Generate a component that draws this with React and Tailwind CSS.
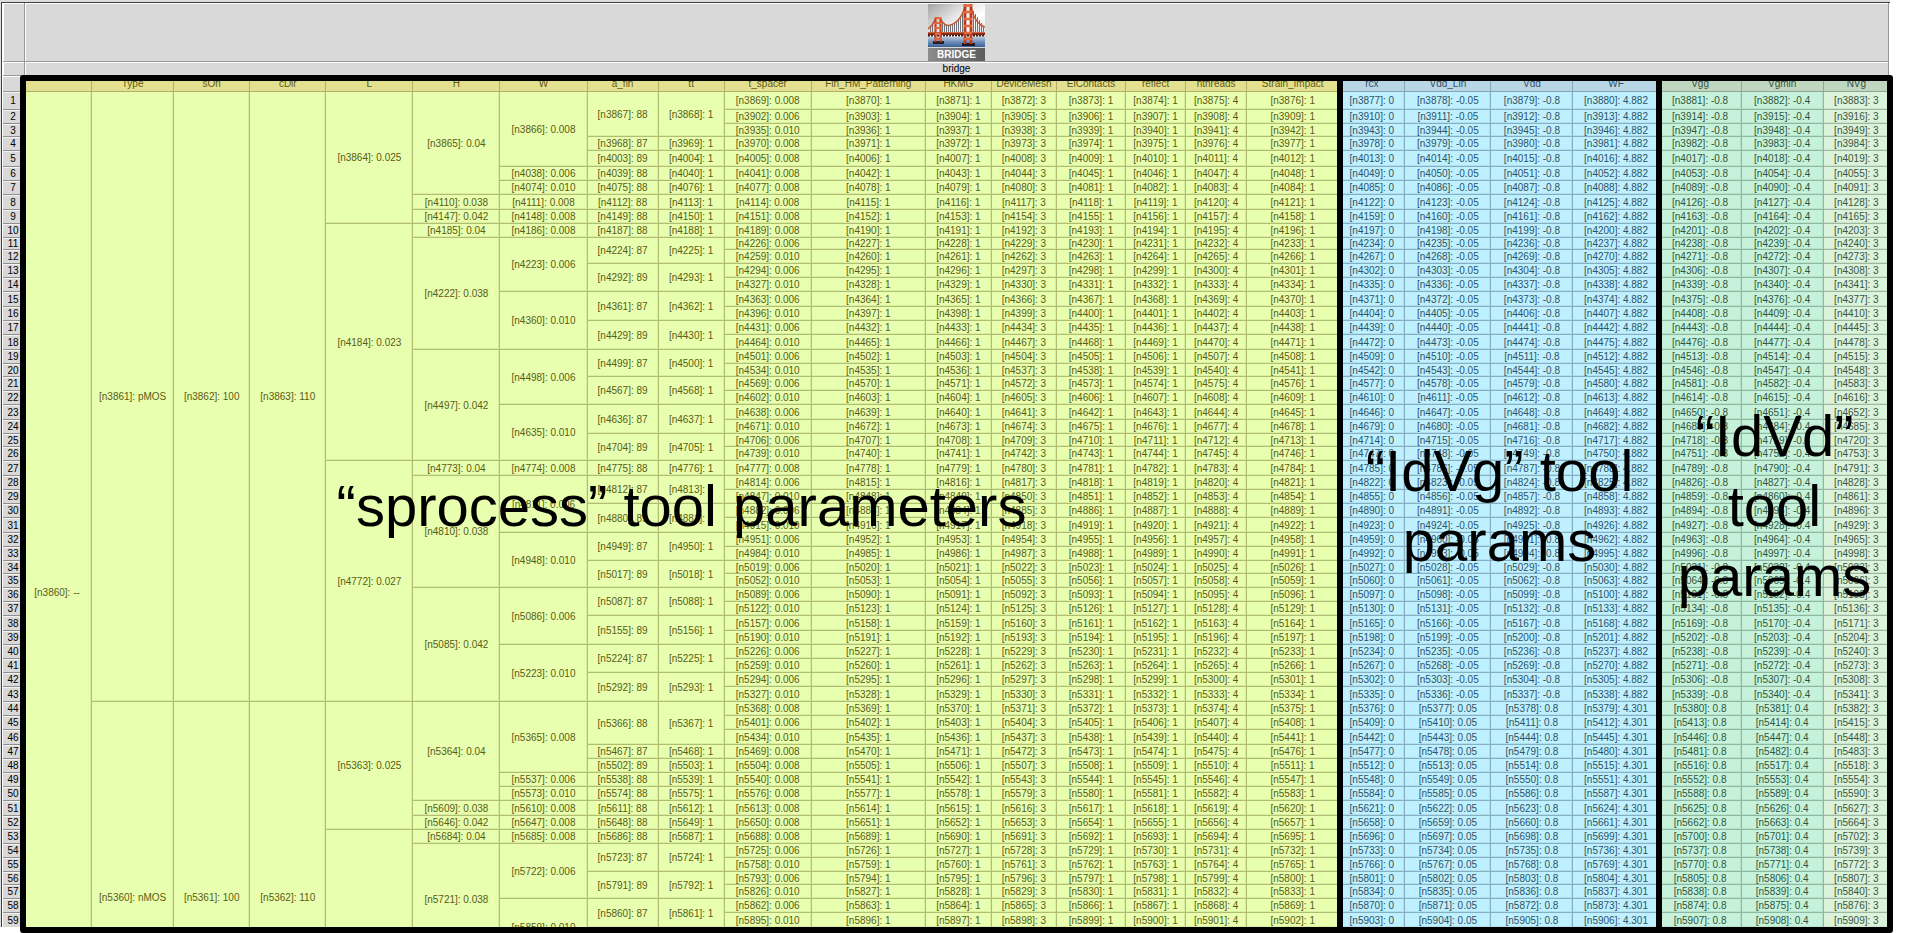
import React from 'react';

const TONES = {
  lime: {
    head: 'bg-[#e3e08f] border-[#b5ae68] text-[#5f5a18]',
    cell: 'bg-[#e8ffb0] border-[#b1bd72] text-[#5a5c12] shadow-[inset_-1px_-1px_0_#d9ee9f]',
  },
  sky: {
    head: 'bg-[#b8d6e6] border-[#85a5b8] text-[#33505f]',
    cell: 'bg-[#bff0ff] border-[#86b0c2] text-[#2c5365] shadow-[inset_-1px_-1px_0_#b0e0f0]',
  },
  mint: {
    head: 'bg-[#bfd6c0] border-[#8ea892] text-[#38543f]',
    cell: 'bg-[#c6f2db] border-[#8fb8a0] text-[#2d5640] shadow-[inset_-1px_-1px_0_#b7e3cb]',
  },
  pale: {
    head: 'bg-[#bfd6c0] border-[#8ea892] text-[#38543f]',
    cell: 'bg-[#dbf2db] border-[#9db8a0] text-[#3a5640] shadow-[inset_-1px_-1px_0_#cce3cc]',
  },
};

const COLUMNS = [
  { name: '', width: 'w-[69px]', tone: 'lime' },
  { name: 'Type', width: 'w-[82px]', tone: 'lime' },
  { name: 'sOri', width: 'w-[76px]', tone: 'lime' },
  { name: 'cDir', width: 'w-[76px]', tone: 'lime' },
  { name: 'L', width: 'w-[87px]', tone: 'lime' },
  { name: 'H', width: 'w-[87px]', tone: 'lime' },
  { name: 'W', width: 'w-[87px]', tone: 'lime' },
  { name: 'a_fin', width: 'w-[71px]', tone: 'lime' },
  { name: 'tt', width: 'w-[66px]', tone: 'lime' },
  { name: 't_spacer', width: 'w-[87px]', tone: 'lime' },
  { name: 'Fin_HM_Patterning', width: 'w-[114px]', tone: 'lime' },
  { name: 'HKMG', width: 'w-[66px]', tone: 'lime' },
  { name: 'DeviceMesh', width: 'w-[65px]', tone: 'lime' },
  { name: 'ElContacts', width: 'w-[69px]', tone: 'lime' },
  { name: 'reflect', width: 'w-[60px]', tone: 'lime' },
  { name: 'nthreads', width: 'w-[61px]', tone: 'lime' },
  { name: 'Strain_Impact', width: 'w-[92px]', tone: 'lime' },
  { name: 'rcx', width: 'w-[66px]', tone: 'sky' },
  { name: 'Vdd_Lin', width: 'w-[86px]', tone: 'sky' },
  { name: 'Vdd', width: 'w-[82px]', tone: 'sky' },
  { name: 'WF', width: 'w-[86px]', tone: 'sky' },
  { name: 'Vgg', width: 'w-[82px]', tone: 'mint' },
  { name: 'Vgmin', width: 'w-[82px]', tone: 'mint' },
  { name: 'NVg', width: 'w-[66px]', tone: 'pale' },
];

// Each entry: [first row, row span, node number, value]
const TYPE = [[1, 43, 3861, 'pMOS'], [44, 18, 5360, 'nMOS']];
const S_ORI = [[1, 43, 3862, '100'], [44, 18, 5361, '100']];
const C_DIR = [[1, 43, 3863, '110'], [44, 18, 5362, '110']];
const L = [
  [1, 9, 3864, '0.025'], [10, 17, 4184, '0.023'], [27, 17, 4772, '0.027'],
  [44, 9, 5363, '0.025'], [53, 9, null, ''],
];
const H = [
  [1, 7, 3865, '0.04'], [8, 1, 4110, '0.038'], [9, 1, 4147, '0.042'], [10, 1, 4185, '0.04'],
  [11, 8, 4222, '0.038'], [19, 8, 4497, '0.042'], [27, 1, 4773, '0.04'], [28, 8, 4810, '0.038'],
  [36, 8, 5085, '0.042'], [44, 7, 5364, '0.04'], [51, 1, 5609, '0.038'], [52, 1, 5646, '0.042'],
  [53, 1, 5684, '0.04'], [54, 7, 5721, '0.038'],
];
const W = [
  [1, 5, 3866, '0.008'], [6, 1, 4038, '0.006'], [7, 1, 4074, '0.010'], [8, 1, 4111, '0.008'],
  [9, 1, 4148, '0.008'], [10, 1, 4186, '0.008'], [11, 4, 4223, '0.006'], [15, 4, 4360, '0.010'],
  [19, 4, 4498, '0.006'], [23, 4, 4635, '0.010'], [27, 1, 4774, '0.008'], [28, 4, 4811, '0.006'],
  [32, 4, 4948, '0.010'], [36, 4, 5086, '0.006'], [40, 4, 5223, '0.010'], [44, 5, 5365, '0.008'],
  [49, 1, 5537, '0.006'], [50, 1, 5573, '0.010'], [51, 1, 5610, '0.008'], [52, 1, 5647, '0.008'],
  [53, 1, 5685, '0.008'], [54, 4, 5722, '0.006'], [58, 3, 5859, '0.010'],
];
const A_FIN = [
  [1, 3, 3867, '88'], [4, 1, 3968, '87'], [5, 1, 4003, '89'], [6, 1, 4039, '88'],
  [7, 1, 4075, '88'], [8, 1, 4112, '88'], [9, 1, 4149, '88'], [10, 1, 4187, '88'],
  [11, 2, 4224, '87'], [13, 2, 4292, '89'], [15, 2, 4361, '87'], [17, 2, 4429, '89'],
  [19, 2, 4499, '87'], [21, 2, 4567, '89'], [23, 2, 4636, '87'], [25, 2, 4704, '89'],
  [27, 1, 4775, '88'], [28, 2, 4812, '87'], [30, 2, 4880, '89'], [32, 2, 4949, '87'],
  [34, 2, 5017, '89'], [36, 2, 5087, '87'], [38, 2, 5155, '89'], [40, 2, 5224, '87'],
  [42, 2, 5292, '89'], [44, 3, 5366, '88'], [47, 1, 5467, '87'], [48, 1, 5502, '89'],
  [49, 1, 5538, '88'], [50, 1, 5574, '88'], [51, 1, 5611, '88'], [52, 1, 5648, '88'],
  [53, 1, 5686, '88'], [54, 2, 5723, '87'], [56, 2, 5791, '89'], [58, 2, 5860, '87'],
];
const TT = A_FIN.map(([row, span, node]) => [row, span, node + 1, '1']);
const GROUPS = [[[1, 61, 3860, '--']], TYPE, S_ORI, C_DIR, L, H, W, A_FIN, TT];

// Each entry: [t_spacer node number, t_spacer value, row height]
const ROWS = [
  [3869, '0.008', 18], [3902, '0.006', 14], [3935, '0.010', 13], [3970, '0.008', 14],
  [4005, '0.008', 16], [4041, '0.008', 14], [4077, '0.008', 14], [4114, '0.008', 15],
  [4151, '0.008', 14], [4189, '0.008', 14], [4226, '0.006', 12], [4259, '0.010', 14],
  [4294, '0.006', 14], [4327, '0.010', 14], [4363, '0.006', 15], [4396, '0.010', 14],
  [4431, '0.006', 14], [4464, '0.010', 15], [4501, '0.006', 14], [4534, '0.010', 13],
  [4569, '0.006', 14], [4602, '0.010', 14], [4638, '0.006', 15], [4671, '0.010', 14],
  [4706, '0.006', 13], [4739, '0.010', 14], [4777, '0.008', 15], [4814, '0.006', 14],
  [4847, '0.010', 14], [4882, '0.006', 14], [4915, '0.010', 15], [4951, '0.006', 14],
  [4984, '0.010', 14], [5019, '0.006', 13], [5052, '0.010', 14], [5089, '0.006', 14],
  [5122, '0.010', 14], [5157, '0.006', 15], [5190, '0.010', 14], [5226, '0.006', 14],
  [5259, '0.010', 14], [5294, '0.006', 14], [5327, '0.010', 15], [5368, '0.008', 14],
  [5401, '0.006', 14], [5434, '0.010', 15], [5469, '0.008', 14], [5504, '0.008', 14],
  [5540, '0.008', 14], [5576, '0.008', 14], [5613, '0.008', 15], [5650, '0.008', 14],
  [5688, '0.008', 14], [5725, '0.006', 14], [5758, '0.010', 14], [5793, '0.006', 13],
  [5826, '0.010', 14], [5862, '0.006', 14], [5895, '0.010', 15],
];

const ROW_HEIGHT = {
  12: 'h-[12px]', 13: 'h-[13px]', 14: 'h-[14px]', 15: 'h-[15px]', 16: 'h-[16px]', 18: 'h-[18px]',
};

function leafValues(rowNumber, spacer) {
  const p = rowNumber <= 43;
  return [
    spacer, '1', '1', '3', '1', '1', '4', '1', '0',
    p ? '-0.05' : '0.05', p ? '-0.8' : '0.8', p ? '4.882' : '4.301',
    p ? '-0.8' : '0.8', p ? '-0.4' : '0.4', '3',
  ];
}

function Cell({ column, span = 1, node, value }) {
  return (
    <td
      rowSpan={span}
      className={`overflow-hidden whitespace-nowrap border-b border-r p-0 text-center align-middle ${TONES[COLUMNS[column].tone].cell}`}
    >
      {node ? `[n${node}]: ${value}` : ''}
    </td>
  );
}

function BridgeIcon() {
  const hangers = [2, 4, 14, 16, 18, 20, 22, 24, 26, 28, 30, 32, 34, 45, 47, 49, 51, 53, 55];
  const cableY = (x) => {
    if (x < 7) return 25 - x * 1.6;
    if (x < 37) return x < 21 ? 21 - ((21 - x) ** 2) / 12 : 21 - ((x - 21) ** 2) / 14;
    return 4 + (x - 43) * 1.5;
  };
  return (
    <svg viewBox="0 0 57 43" className="block h-[43px] w-[57px]" aria-hidden="true">
      <defs>
        <linearGradient id="sky" x1="0" y1="0" x2="1" y2="1">
          <stop offset="0" stopColor="#a3a3a3" />
          <stop offset="0.35" stopColor="#e2e2e2" />
          <stop offset="0.6" stopColor="#ffffff" />
          <stop offset="1" stopColor="#c9c9c9" />
        </linearGradient>
        <linearGradient id="water" x1="0" y1="0" x2="0" y2="1">
          <stop offset="0" stopColor="#b9c8dc" />
          <stop offset="0.5" stopColor="#6d8db8" />
          <stop offset="1" stopColor="#3c5f94" />
        </linearGradient>
      </defs>
      <rect width="57" height="43" fill="url(#sky)" />
      <rect y="33" width="57" height="10" fill="url(#water)" />
      {hangers.map((x) => (
        <path key={x} d={`M${x + 0.5} ${cableY(x)}V29`} stroke="#6f7379" strokeWidth="1" />
      ))}
      <path d="M0 25Q5 21 8 14M12 14Q16 22 21 21.500Q32 19 37 3M43 3Q47 20 57 23" fill="none" stroke="#c8552f" strokeWidth="1.4" />
      <rect y="28" width="57" height="3" fill="#8c2c1a" />
      <path d="M0 28.5H57" stroke="#e0764a" strokeWidth="0.8" />
      <path d="M0 31.6H57" stroke="#3a1a16" strokeWidth="1.6" strokeDasharray="2 1" />
      <rect x="5" y="37" width="11" height="3" fill="#2a1d24" />
      <path d="M7.5 13.5V38M12.500 13.5V38" stroke="#c4431f" strokeWidth="2.2" />
      <path d="M7 14H13M7 19H13M7 24H13M7 30H13M7 35H13" stroke="#e0683a" strokeWidth="1.8" />
      <rect x="34" y="39" width="13" height="3" fill="#1f1a24" />
      <path d="M37 0V40M43 0V40" stroke="#b93a1b" strokeWidth="2.8" />
      <path d="M36 1.500H44M36 8H44M36 15H44M36 22H44M36 29H44M36 35H44" stroke="#e26a3c" strokeWidth="2.4" />
    </svg>
  );
}

const STRIP = 'border-b border-r border-[#999999] bg-[#d9d9d9] shadow-[inset_1px_1px_0_#ffffff]';
const NOTE = 'flex items-center justify-center border-black pt-1 text-center text-[58px] leading-[70px] text-black';

export default function App() {
  return (
    <main className="flex h-screen flex-col overflow-hidden bg-white pr-[15px] font-['Liberation_Sans',Arial,sans-serif]">
      <div className="relative flex min-h-0 flex-1 flex-col pb-[6px]">
        <div className="mr-[3px] flex min-h-0 flex-1 flex-col border-l border-t-2 border-[#dddddd]">
          <div className="flex min-h-0 flex-1 flex-col border-l border-t border-[#404040]">
            <header className="flex flex-none flex-col pl-px pr-px text-[10px] leading-[12px]">
              <div className="flex h-[59px]">
                <div className={`w-[22px] ${STRIP}`} />
                <div className={`flex flex-1 justify-center pt-px ${STRIP}`}>
                  <button type="button" aria-label="BRIDGE" className="block w-[57px]">
                    <BridgeIcon />
                    <span className="mt-px block h-[13px] bg-linear-to-r from-[#8c8c8c] to-[#5c5c5c] text-center text-[10px] font-bold leading-[13px] text-white">
                      BRIDGE
                    </span>
                  </button>
                </div>
              </div>
              <div className="flex h-[14px]">
                <div className={`w-[22px] ${STRIP}`} />
                <div className={`flex-1 pt-px text-center text-black ${STRIP}`}>bridge</div>
              </div>
            </header>

            <div className="min-h-0 flex-1 overflow-hidden pl-px">
              <table className="w-full table-fixed border-separate border-spacing-0 text-[10px] leading-[11px]">
                <colgroup>
                  <col className="w-[20px]" />
                  {COLUMNS.map((c, i) => (
                    <col key={i} className={c.width} />
                  ))}
                </colgroup>
                <thead>
                  <tr className="h-[16px]">
                    <td className="border-b border-[#999999] bg-[#d9d9d9] p-0 shadow-[inset_0_1px_0_#ffffff]" />
                    {COLUMNS.map((c, i) => (
                      <th
                        key={i}
                        scope="col"
                        className={`whitespace-nowrap border-b border-r p-0 text-center font-normal ${TONES[c.tone].head}`}
                      >
                        {c.name}
                      </th>
                    ))}
                  </tr>
                </thead>
                <tbody>
                  {ROWS.map(([node, spacer, height], r) => {
                    const n = r + 1;
                    return (
                      <tr key={n} className={ROW_HEIGHT[height]}>
                        <th
                          scope="row"
                          className="border-b border-[#8f8f8f] bg-[#d9d9d9] p-0 text-center font-normal text-black shadow-[inset_0_1px_0_#f2f2f2]"
                        >
                          {n}
                        </th>
                        {GROUPS.map((group, c) => {
                          const entry = group.find((g) => g[0] === n);
                          return entry ? (
                            <Cell key={c} column={c} span={entry[1]} node={entry[2]} value={entry[3]} />
                          ) : null;
                        })}
                        {leafValues(n, spacer).map((value, i) => (
                          <Cell key={i + 9} column={i + 9} node={node + i} value={value} />
                        ))}
                      </tr>
                    );
                  })}
                  <tr className="h-[28px]" />
                  <tr className="h-[138px]" />
                </tbody>
              </table>
            </div>
          </div>
        </div>

        <div className="pointer-events-none absolute bottom-0 left-[20px] right-0 top-[75px] grid grid-cols-[1317fr_319fr_225fr] rounded-[3px] border-[6px] border-black">
          <div className={`border-r-[6px] ${NOTE}`}>“sprocess” tool parameters</div>
          <div className={`border-r-[6px] ${NOTE}`}>“IdVg” tool params</div>
          <div className={NOTE}>“IdVd” tool params</div>
        </div>
      </div>
    </main>
  );
}
